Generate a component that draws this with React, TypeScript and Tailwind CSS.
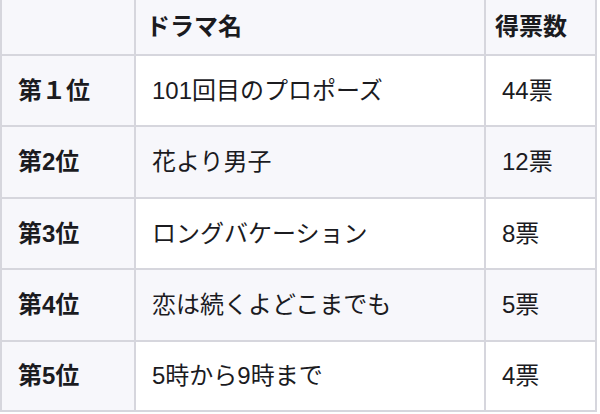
const rows = [
  { rank: "第１位", title: "101回目のプロポーズ", votes: "44票" },
  { rank: "第2位", title: "花より男子", votes: "12票" },
  { rank: "第3位", title: "ロングバケーション", votes: "8票" },
  { rank: "第4位", title: "恋は続くよどこまでも", votes: "5票" },
  { rank: "第5位", title: "5時から9時まで", votes: "4票" },
];

const heights = ["h-[71px]", "h-[72px]", "h-[71px]", "h-[72px]", "h-[70px]"];

export default function App() {
  return (
    <div
      className="w-[600px] h-[414px] bg-white overflow-hidden text-[#1b1b1f]"
      style={{ fontFamily: '"Liberation Sans", "Noto Sans CJK JP", sans-serif' }}
    >
      <div className="w-[597px] border-l-2 border-[#d6d6dd]">
        <div className="grid grid-cols-[134px_350px_111px] h-[56px] border-b-2 border-[#d6d6dd] bg-[#f7f7fb] text-[24px] font-bold">
          <div className="border-r-2 border-[#d6d6dd]" />
          <div className="border-r-2 border-[#d6d6dd] flex items-center pl-[10px]">ドラマ名</div>
          <div className="border-r-2 border-[#d6d6dd] flex items-center pl-[9px]">得票数</div>
        </div>
        {rows.map((row, i) => (
          <div
            key={row.rank}
            className={`grid grid-cols-[134px_350px_111px] ${heights[i]} border-b-2 border-[#d6d6dd] text-[24px] ${
              i % 2 === 1 ? "bg-[#f7f7fb]" : "bg-white"
            }`}
          >
            <div className="border-r-2 border-[#d6d6dd] bg-[#f7f7fb] flex items-center pl-[16px] font-bold">
              {row.rank}
            </div>
            <div className="border-r-2 border-[#d6d6dd] flex items-center pl-[16px]">{row.title}</div>
            <div className="border-r-2 border-[#d6d6dd] flex items-center pl-[16px]">{row.votes}</div>
          </div>
        ))}
      </div>
    </div>
  );
}
